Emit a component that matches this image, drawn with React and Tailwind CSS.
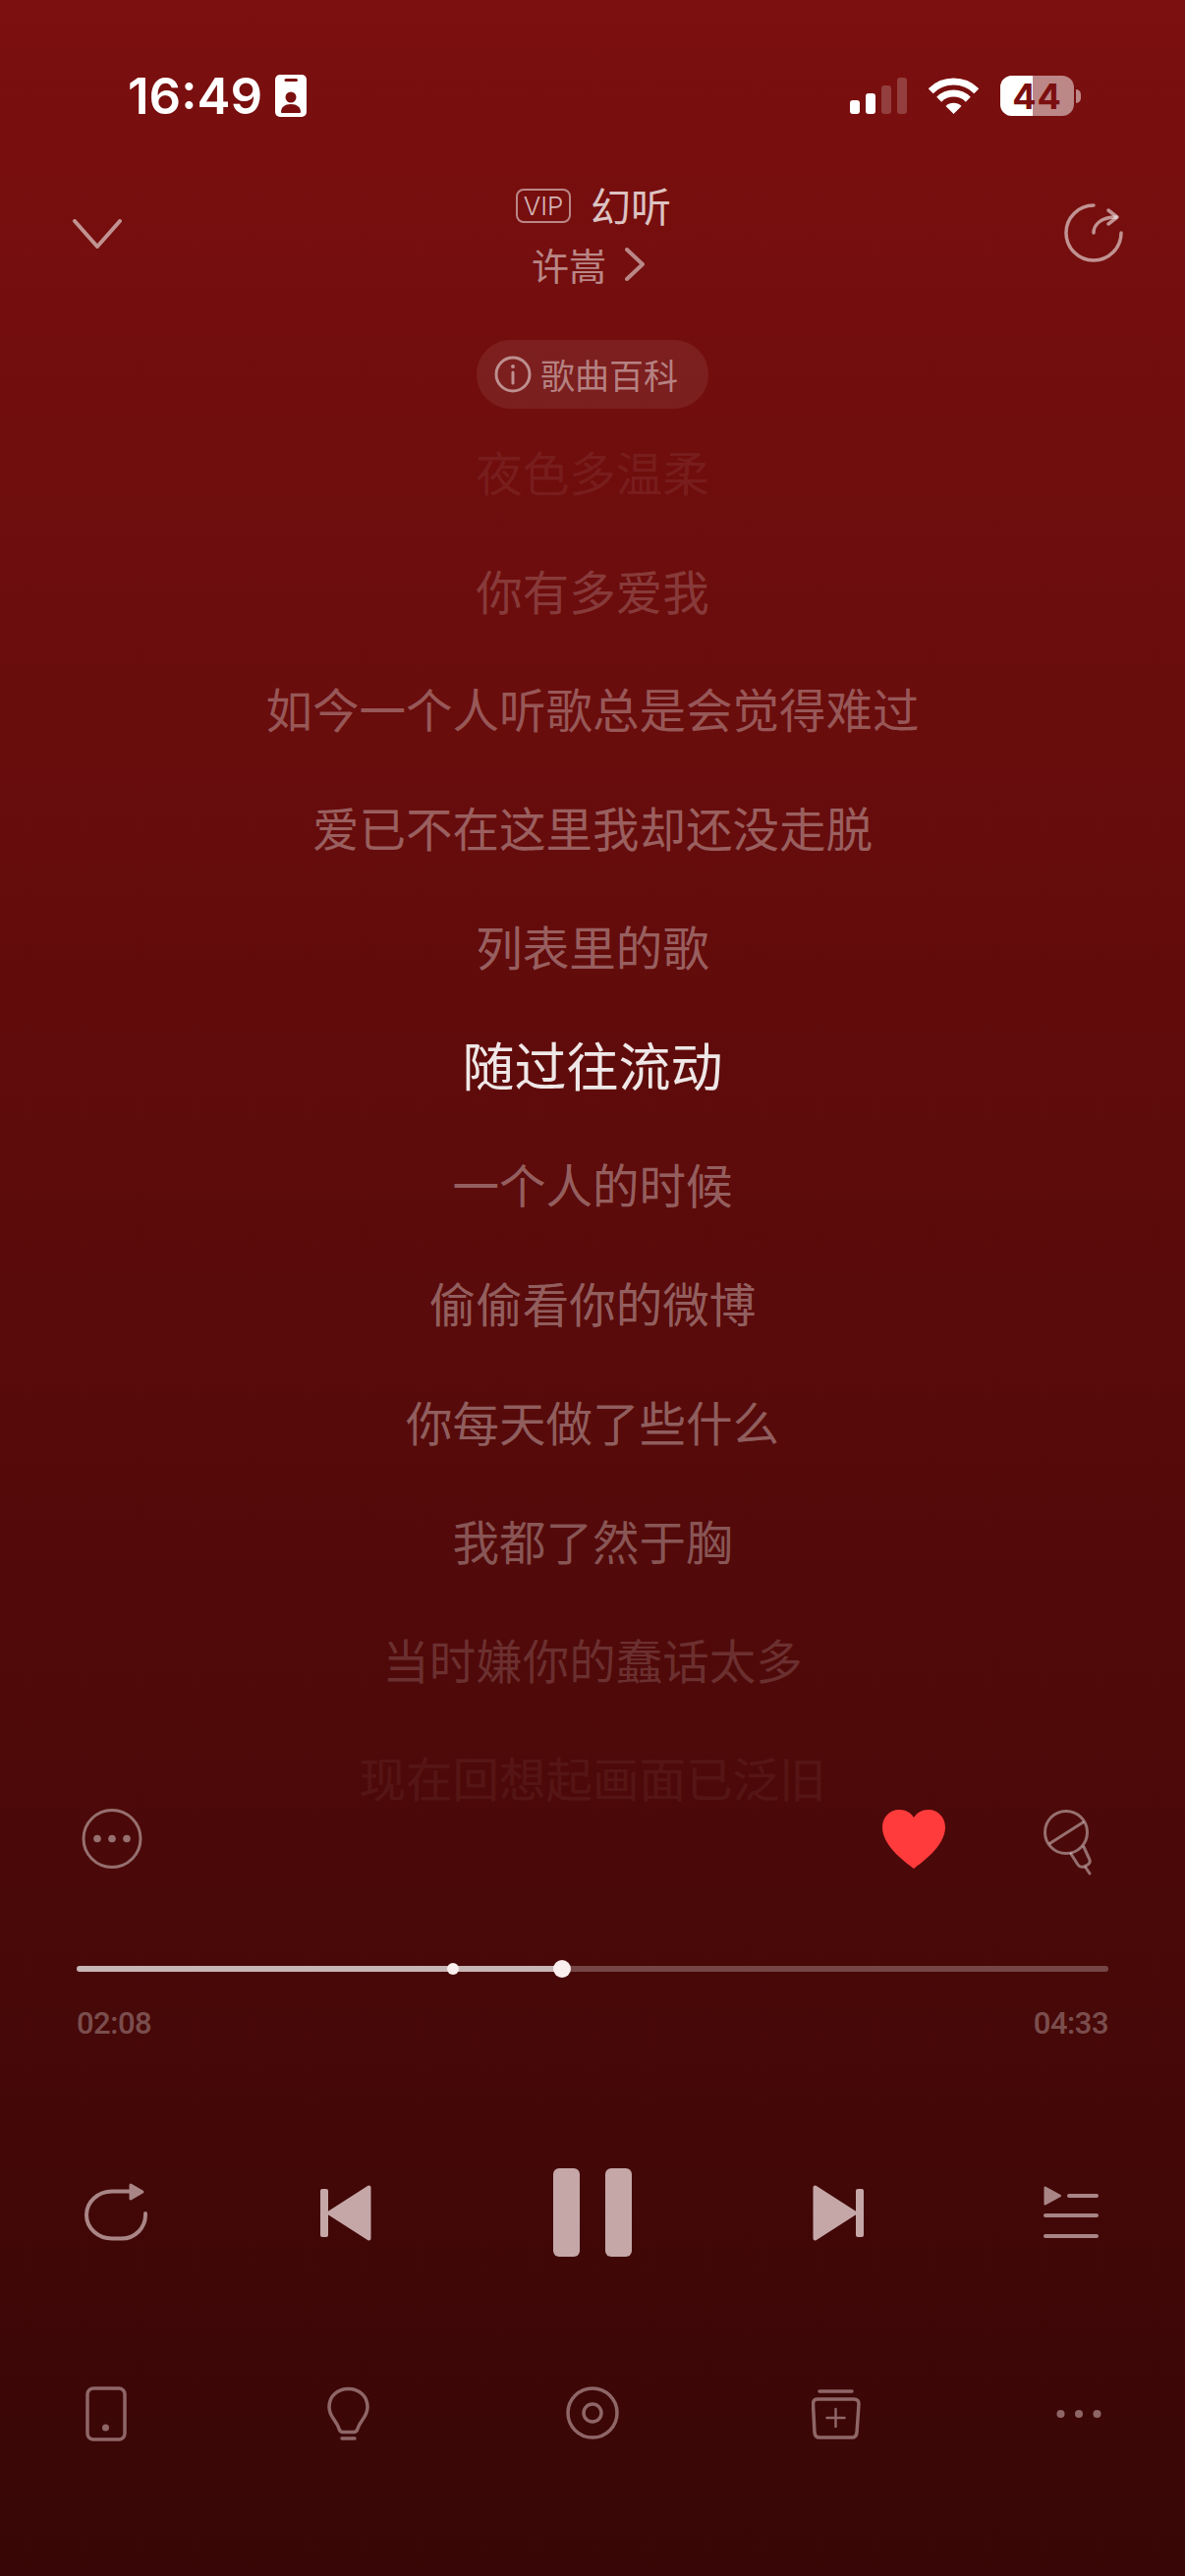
const lyrics = [
  { text: '夜色多温柔', tone: 'text-white/[0.08] text-[47.5px]' },
  { text: '你有多爱我', tone: 'text-white/[0.2] text-[47.5px]' },
  { text: '如今一个人听歌总是会觉得难过', tone: 'text-white/[0.31] text-[47.5px]' },
  { text: '爱已不在这里我却还没走脱', tone: 'text-white/[0.34] text-[47.5px]' },
  { text: '列表里的歌', tone: 'text-white/[0.37] text-[47.5px]' },
  { text: '随过往流动', tone: 'text-white/[0.9] text-[53px]' },
  { text: '一个人的时候', tone: 'text-white/[0.37] text-[47.5px]' },
  { text: '偷偷看你的微博', tone: 'text-white/[0.37] text-[47.5px]' },
  { text: '你每天做了些什么', tone: 'text-white/[0.35] text-[47.5px]' },
  { text: '我都了然于胸', tone: 'text-white/[0.31] text-[47.5px]' },
  { text: '当时嫌你的蠢话太多', tone: 'text-white/[0.16] text-[47.5px]' },
  { text: '现在回想起画面已泛旧', tone: 'text-white/[0.05] text-[47.5px]' },
];

function StatusBar() {
  return (
    <div className="mt-[76px] flex h-[43px] items-center justify-between pl-[130px] pr-[106px]">
      <div className="flex items-center gap-[13px]">
        <span className="font-['Inter',sans-serif] text-[51px] font-semibold leading-none text-white">16:49</span>
        <svg width="32" height="43" viewBox="0 0 32 43">
          <rect width="32" height="43" rx="5" fill="#fff" />
          <rect x="9.5" y="4" width="13.5" height="3" rx="1.5" fill="#7b0f0f" />
          <circle cx="16" cy="23" r="5.5" fill="#7b0f0f" />
          <path d="M6 38 C6 33 10 30 16 30 C22 30 26 33 26 38 Q26 39 25 39 H7 Q6 39 6 38Z" fill="#7b0f0f" />
        </svg>
      </div>
      <div className="flex items-center">
        <svg width="58" height="37" viewBox="0 0 58 37">
          <rect x="0" y="23" width="10" height="14" rx="3" fill="#fff" />
          <rect x="16" y="16" width="10" height="21" rx="3" fill="#fff" />
          <rect x="32" y="8" width="10" height="29" rx="3" fill="#fff" fillOpacity="0.2" />
          <rect x="48" y="0" width="10" height="37" rx="3" fill="#fff" fillOpacity="0.2" />
        </svg>
        <svg className="ml-[22px]" width="51" height="37" viewBox="0 0 51 37" fill="none" stroke="#fff">
          <path d="M2.2 13.7 A33 33 0 0 1 48.8 13.7" strokeWidth="7" />
          <path d="M10.7 22.2 A21 21 0 0 1 40.3 22.2" strokeWidth="7" />
          <path d="M25.5 37 L17.5 29 A11.5 11.5 0 0 1 33.5 29 Z" fill="#fff" stroke="none" />
        </svg>
        <div className="relative ml-[22px] h-[41px] w-[75px] overflow-hidden rounded-[12px] bg-white/50">
          <div className="absolute inset-y-0 left-0 w-[33px] bg-white" />
          <span className="absolute inset-0 flex items-center justify-center font-['Inter',sans-serif] text-[36px] font-bold leading-none tracking-[1px] text-[#7b0f0f]">44</span>
        </div>
        <div className="ml-[2px] h-[14px] w-[5px] rounded-r-full bg-white/50" />
      </div>
    </div>
  );
}

function Header() {
  return (
    <div className="mt-[70px] grid h-[98px] grid-cols-[1fr_auto_1fr] items-center">
      <div className="pl-[74px]">
        <svg className="block" width="50" height="30" viewBox="0 0 50 30" fill="none" stroke="#fff" strokeOpacity="0.55" strokeWidth="4" strokeLinecap="round" strokeLinejoin="round">
          <path d="M2 2 L25 28 L48 2" />
        </svg>
      </div>
      <div className="flex flex-col items-center">
        <div className="flex h-[40px] items-center gap-[20px]">
          <span className="ml-[2px] flex h-[35px] w-[56px] items-center justify-center rounded-[8px] border-2 border-white/50 font-['Inter',sans-serif] text-[26px] font-light leading-none text-white/70">VIP</span>
          <span className="mb-[3px] text-[41px] leading-none text-white/75">幻听</span>
        </div>
        <div className="mr-[9px] mt-[21px] flex h-[36px] items-center gap-[19px]">
          <span className="text-[38px] leading-none text-white/50">许嵩</span>
          <svg width="20" height="34" viewBox="0 0 20 34" fill="none" stroke="#fff" strokeOpacity="0.5" strokeWidth="4" strokeLinecap="round" strokeLinejoin="round">
            <path d="M2 2 L18 17 L2 32" />
          </svg>
        </div>
      </div>
      <div className="flex justify-end pb-[3px] pr-[62px]">
        <svg width="62" height="62" viewBox="0 0 62 62" fill="none" stroke="#fff" strokeOpacity="0.55" strokeWidth="3.5" strokeLinecap="round" strokeLinejoin="round">
          <path d="M31 3 A28 28 0 1 0 59 31" />
          <path d="M31 31 C31 23 38 15 54 15" />
          <path d="M46 8 L55 15 L46 22" />
        </svg>
      </div>
    </div>
  );
}

function Lyrics() {
  return (
    <div className="mt-[3px] h-[1422px]">
      {lyrics.map((line) => (
        <div key={line.text} className={`flex h-[120.9px] items-center justify-center leading-none ${line.tone}`}>
          {line.text}
        </div>
      ))}
    </div>
  );
}

function ActionRow() {
  return (
    <div className="flex h-[62px] items-start pl-[83px]">
      <svg width="62" height="62" viewBox="0 0 62 62" fill="none" stroke="#fff" strokeOpacity="0.42" strokeWidth="3">
        <circle cx="31" cy="30.5" r="29" />
        <circle cx="16" cy="30.5" r="3.8" fill="#fff" fillOpacity="0.42" stroke="none" />
        <circle cx="31" cy="30.5" r="3.8" fill="#fff" fillOpacity="0.42" stroke="none" />
        <circle cx="46" cy="30.5" r="3.8" fill="#fff" fillOpacity="0.42" stroke="none" />
      </svg>
      <svg className="ml-[753px] mt-[1px]" width="64" height="60" viewBox="0 0 64 60">
        <path d="M32 60 C26 55 0 38 0 18 C0 7 8 0 17 0 C24 0 29 3 32 8 C35 3 40 0 47 0 C56 0 64 7 64 18 C64 38 38 55 32 60Z" fill="#ff3b3c" />
      </svg>
      <svg className="ml-[98px]" width="56" height="68" viewBox="0 0 56 68" fill="none" stroke="#fff" strokeOpacity="0.42" strokeWidth="3" strokeLinecap="round" strokeLinejoin="round">
        <circle cx="25" cy="24" r="21.5" />
        <path d="M9 35 L42 14" />
        <path d="M30 46 L37 57 Q39 60 43 59 L47 57 Q50 55 49 52 L43 39" />
        <path d="M45 60 L49 66" />
      </svg>
    </div>
  );
}

function Progress() {
  return (
    <div className="mt-[98px] px-[78px]">
      <div className="relative h-[6px] rounded-full bg-white/25">
        <div className="absolute inset-y-0 left-0 w-[494px] rounded-full bg-white/60" />
        <div className="absolute left-[377px] top-[-3px] h-[12px] w-[12px] rounded-full bg-[#fbeeee]" />
        <div className="absolute left-[485px] top-[-6px] h-[18px] w-[18px] rounded-full bg-[#fbeeee]" />
      </div>
      <div className="mt-[36px] flex justify-between font-['Roboto',sans-serif] text-[31px] font-medium leading-[34px] tracking-[-0.5px] text-white/30">
        <span>02:08</span>
        <span>04:33</span>
      </div>
    </div>
  );
}

function SkipIcon({ className }) {
  return (
    <svg className={className} width="52" height="57" viewBox="0 0 52 57" fill="#c5a7a8">
      <rect x="0" y="4" width="8" height="49" rx="2" />
      <path d="M49.5 2.5 L9 28.5 L49.5 54.5 Z" stroke="#c5a7a8" strokeWidth="4" strokeLinejoin="round" />
    </svg>
  );
}

function Transport() {
  return (
    <div className="mt-[130px] flex h-[90px] items-center pl-[86px]">
      <svg width="64" height="60" viewBox="0 0 64 60" fill="none" stroke="#a98586" strokeWidth="4" strokeLinecap="round">
        <path d="M48 8.5 H28 A26 24 0 0 0 28 56.5 H38 A24 24 0 0 0 62 32.5 V31" />
        <path d="M47 2 L59 9 L47 16 Z" fill="#a98586" strokeLinejoin="round" strokeWidth="3" />
      </svg>
      <SkipIcon className="ml-[176px]" />
      <div className="ml-[185px] flex gap-[26px]">
        <div className="h-[90px] w-[27px] rounded-[6px] bg-[#c5a7a8]" />
        <div className="h-[90px] w-[27px] rounded-[6px] bg-[#c5a7a8]" />
      </div>
      <SkipIcon className="ml-[184px] -scale-x-100" />
      <svg className="ml-[183px]" width="56" height="54" viewBox="0 0 56 54" fill="none" stroke="#a98586" strokeWidth="4" strokeLinecap="round">
        <path d="M1.5 1.5 L17 10 L1.5 18.5 Z" fill="#a98586" strokeWidth="2" strokeLinejoin="round" />
        <path d="M26 10 H54" />
        <path d="M2 30 H54" />
        <path d="M2 51 H54" />
      </svg>
    </div>
  );
}

function BottomBar() {
  return (
    <div className="mt-[132px] flex h-[56px] items-start pl-[87px]">
      <svg width="42" height="56" viewBox="0 0 42 56" fill="none" stroke="#8f6667" strokeWidth="3.5">
        <rect x="2" y="2" width="38" height="52" rx="6" />
        <circle cx="20.5" cy="42" r="3.5" fill="#8f6667" stroke="none" />
      </svg>
      <svg className="ml-[204px]" width="44" height="56" viewBox="0 0 44 56" fill="none" stroke="#8f6667" strokeWidth="3.5" strokeLinecap="round">
        <path d="M21.5 2.5 C10 2.5 2 10.5 2 21 C2 31 9 34 12 43 Q13 46.5 16 46.5 H27 Q30 46.5 31 43 C34 34 41 31 41 21 C41 10.5 33 2.5 21.5 2.5Z" />
        <path d="M15 53 H28" />
      </svg>
      <svg className="ml-[199px]" width="54" height="54" viewBox="0 0 54 54" fill="none" stroke="#8f6667" strokeWidth="3.5">
        <circle cx="27" cy="27" r="25" />
        <circle cx="27" cy="27" r="9" />
      </svg>
      <svg className="ml-[196px] mt-[3px]" width="50" height="52" viewBox="0 0 50 52" fill="none" stroke="#8f6667" strokeWidth="3.5" strokeLinecap="round">
        <path d="M8 2 H41" />
        <path d="M6 10 H43 Q48 10 48 15 L46 44 Q45.5 49 41 49 H8 Q3.5 49 3 44 L1.5 15 Q1.5 10 6 10Z" />
        <path d="M24.5 20 V38 M15.5 29 H33.5" strokeWidth="2.5" />
      </svg>
      <svg className="ml-[199px] mt-[23px]" width="46" height="10" viewBox="0 0 46 10" fill="#8f6667">
        <circle cx="4.5" cy="5" r="4" />
        <circle cx="23" cy="5" r="4" />
        <circle cx="41.5" cy="5" r="4" />
      </svg>
    </div>
  );
}

export default function App() {
  return (
    <div className="flex h-[2622px] w-[1206px] flex-col overflow-hidden bg-[linear-gradient(180deg,#7c0f0f_0%,#380606_100%)] font-['Noto_Sans_CJK_SC','Liberation_Sans',sans-serif]">
      <StatusBar />
      <Header />
      <div className="mt-[59px] flex justify-center">
        <div className="flex h-[70px] w-[236px] items-center gap-[9px] rounded-full bg-white/[0.07] pl-[18px]">
          <svg width="38" height="38" viewBox="0 0 38 38" fill="none" stroke="#fff" strokeOpacity="0.5" strokeWidth="3" strokeLinecap="round">
            <circle cx="19" cy="19" r="17" />
            <path d="M19 17 V28" />
            <circle cx="19" cy="11" r="2" fill="#fff" fillOpacity="0.5" stroke="none" />
          </svg>
          <span className="mb-[2px] text-[35px] leading-none text-white/[0.45]">歌曲百科</span>
        </div>
      </div>
      <Lyrics />
      <ActionRow />
      <Progress />
      <Transport />
      <BottomBar />
    </div>
  );
}
